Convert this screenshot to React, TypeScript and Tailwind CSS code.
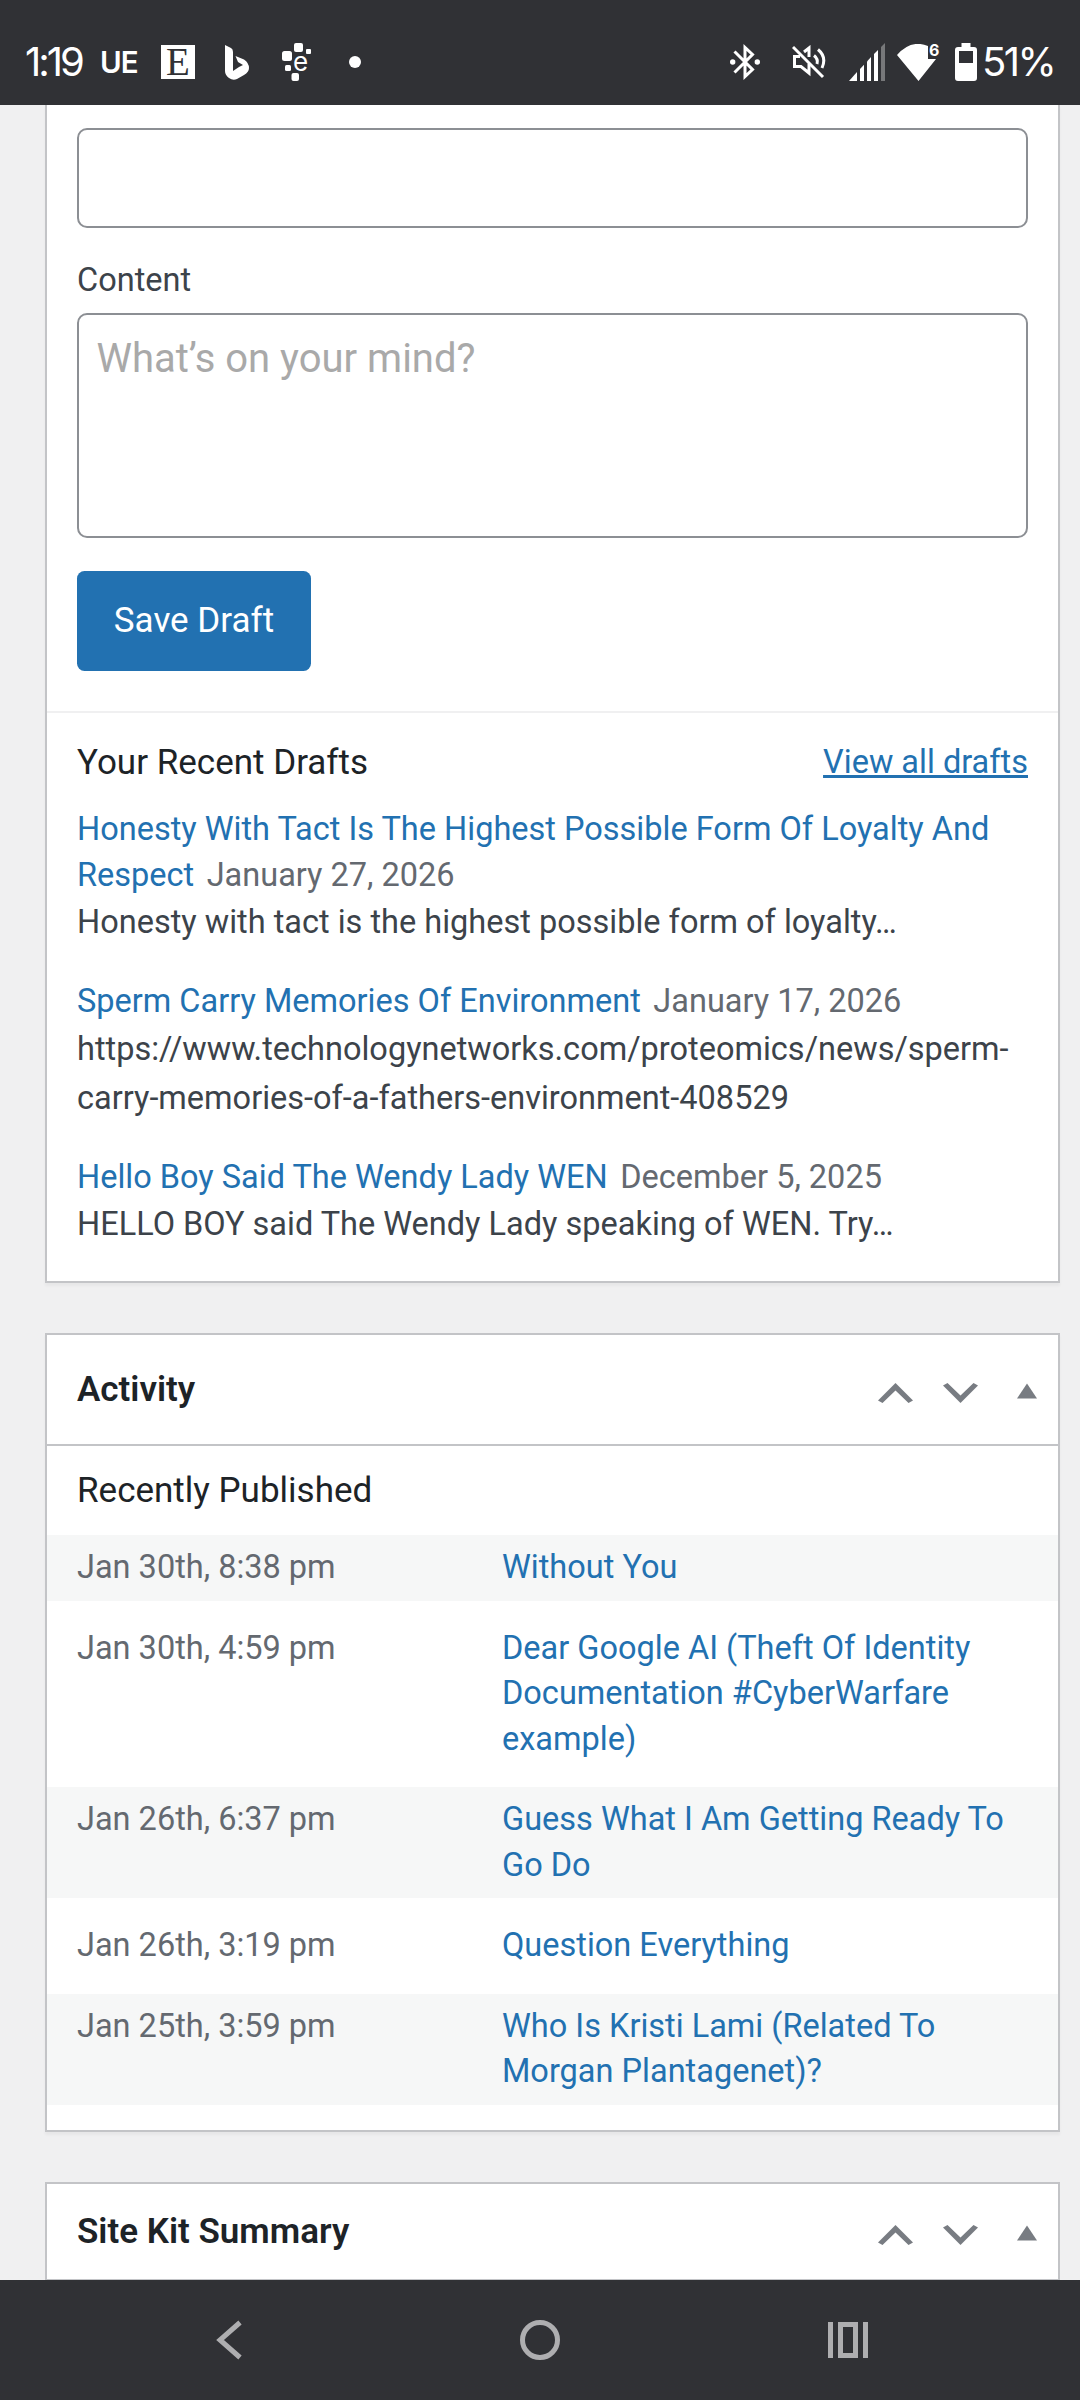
const DRAFTS = [
  {
    title: 'Honesty With Tact Is The Highest Possible Form Of Loyalty And Respect',
    date: 'January 27, 2026',
    excerpt: 'Honesty with tact is the highest possible form of loyalty…',
  },
  {
    title: 'Sperm Carry Memories Of Environment',
    date: 'January 17, 2026',
    excerpt:
      'https://www.technologynetworks.com/proteomics/news/sperm-carry-memories-of-a-fathers-environment-408529',
  },
  {
    title: 'Hello Boy Said The Wendy Lady WEN',
    date: 'December 5, 2025',
    excerpt: 'HELLO BOY said The Wendy Lady speaking of WEN. Try…',
  },
]

const POSTS = [
  { date: 'Jan 30th, 8:38 pm', title: 'Without You' },
  {
    date: 'Jan 30th, 4:59 pm',
    title: 'Dear Google AI (Theft Of Identity Documentation #CyberWarfare example)',
  },
  { date: 'Jan 26th, 6:37 pm', title: 'Guess What I Am Getting Ready To Go Do' },
  { date: 'Jan 26th, 3:19 pm', title: 'Question Everything' },
  { date: 'Jan 25th, 3:59 pm', title: 'Who Is Kristi Lami (Related To Morgan Plantagenet)?' },
]

function StatusBar() {
  return (
    <header className="flex h-[105px] shrink-0 items-center justify-between bg-[#303135] pt-[19px] pr-[28px] pl-[25px] font-['Inter',sans-serif] text-white">
      <div className="flex items-center">
        <span className="w-[75px] text-[40px] leading-[40px] tracking-[-3px]">1:19</span>
        <span className="w-[61px] text-[29.5px] leading-[40px] font-semibold tracking-[-1px]">UE</span>
        {/* Etsy */}
        <span className="flex size-[34px] items-center justify-center bg-white font-['Liberation_Serif',serif] text-[39px] leading-[34px] text-[#303135]">
          E
        </span>
        {/* Bing */}
        <svg className="ml-[30px]" width="24" height="35" viewBox="0 0 24 35" fill="currentColor">
          <path d="M0 0 L6 3 Q8 4 8 7 V26 L14 22 L18 20 L13 17 L10.5 11 L19 14.5 Q24 18 24 23 Q24 27 19 30 L12 34 Q8 36 4 33 Q0 30 0 26 Z" />
        </svg>
        {/* Dotted "e" app badge */}
        <span className="relative ml-[33px] block h-[38px] w-[29px]">
          <svg width="29" height="38" viewBox="0 0 29 38" fill="currentColor">
            <rect x="12" y="0" width="9" height="9" rx="2" />
            <rect x="24" y="6" width="5" height="5" rx="1" />
            <rect x="0" y="8" width="10" height="10" rx="2.5" />
            <rect x="3" y="22" width="6" height="6" rx="1.5" />
            <rect x="9.500" y="30" width="7.500" height="8" rx="2" />
          </svg>
          <span className="absolute top-[7px] left-[11px] text-[26px] leading-[24px]">e</span>
        </span>
        <span className="ml-[38px] size-3 rounded-full bg-white" />
      </div>

      <div className="flex items-center">
        {/* Bluetooth, connected */}
        <svg width="30" height="36" viewBox="0 0 30 36" fill="none" stroke="currentColor" strokeWidth="3">
          <path d="M4.500 7.500 L22.500 25.500 L15 32.500 V3.500 L22.500 10.500 L4.500 28.500" />
          <circle cx="2.700" cy="18" r="2.700" fill="currentColor" stroke="none" />
          <circle cx="27.300" cy="18" r="2.700" fill="currentColor" stroke="none" />
        </svg>
        {/* Muted speaker */}
        <svg className="ml-[32px]" width="34" height="34" viewBox="0 0 34 34" fill="none" stroke="currentColor" strokeWidth="3">
          <path d="M1 2 L31 32" />
          <path d="M8 11.500 H2.500 V21.500 H9 L17 28 V19" />
          <path d="M12 7 L17 3 V12" />
          <path d="M22 10.500 Q26.500 14 25 19" />
          <path d="M26 4.500 Q35 12 30 23" />
        </svg>
        {/* Signal strength */}
        <svg className="ml-[23px]" width="36" height="38" viewBox="0 0 36 38" fill="currentColor">
          <path d="M0 38 L8 29 V38 Z" />
          <path d="M11 26 L15 21.700 V38 H11 Z" />
          <path d="M18 18.500 L22 14 V38 H18 Z" />
          <path d="M25 11 L29 7 V38 H25 Z" />
          <path d="M32 4 L36 0 V38 H32 Z" fill="#77787a" />
        </svg>
        {/* Wi-Fi 6 */}
        <span className="relative ml-[12px] block h-[37px] w-[43px]">
          <svg width="43" height="37" viewBox="0 0 43 37" fill="currentColor">
            <path d="M0 11 Q14 -5 31 2 V15 H39 L21.500 37 Z" />
          </svg>
          <span className="absolute top-[-2px] left-[32px] text-[16px] leading-[16px] font-bold">6</span>
        </span>
        {/* Battery */}
        <svg className="ml-[15px]" width="22" height="38" viewBox="0 0 22 38" fill="currentColor">
          <path fillRule="evenodd" d="M6.500 0 H15.500 V4 H19 Q22 4 22 7 V35 Q22 38 19 38 H3 Q0 38 0 35 V7 Q0 4 3 4 H6.500 Z M4 8 V20 H18 V8 Z" />
        </svg>
        <span className="ml-[5px] w-[70px] text-[40px] leading-[40px] tracking-[-2.6px]">51%</span>
      </div>
    </header>
  )
}

function BoxHeader({ title }: { title: string }) {
  return (
    <div className="flex h-full items-center justify-between border-b-2 border-[#c3c4c7] pr-[21px] pl-[30px] text-[#787c82]">
      <h2 className="text-[35px] leading-[49px] font-semibold text-[#1d2327]">{title}</h2>
      <div className="mt-[7px] flex items-center">
        <svg width="35" height="20" viewBox="0 0 35 20" fill="currentColor">
          <path d="M17.500 0 L35 17.500 L30.500 20 L17.500 7.500 L4.500 20 L0 17.500 Z" />
        </svg>
        <svg className="ml-[30px]" width="35" height="20" viewBox="0 0 35 20" fill="currentColor">
          <path d="M17.500 20 L35 2.500 L30.500 0 L17.500 12.500 L4.500 0 L0 2.500 Z" />
        </svg>
        <svg className="mb-[4px] ml-[39px]" width="20" height="16" viewBox="0 0 20 16" fill="currentColor">
          <path d="M10 0.500 L20 15.500 H0 Z" />
        </svg>
      </div>
    </div>
  )
}

function QuickDraft() {
  return (
    <section className="h-[1178px] shrink-0 border-x-2 border-b-2 border-[#c3c4c7] bg-white shadow-[0_2.5px_2.5px_rgba(0,0,0,0.04)]">
      <div className="h-[608px] border-b-2 border-[#f0f0f1] px-[30px] pt-[23px]">
        <div className="h-[100px] rounded-[10px] border-2 border-[#8c8f94]" />
        <label className="mt-[29px] block h-[56px] text-[32.5px] leading-[46px] text-[#3c434a]">Content</label>
        <div className="h-[225px] rounded-[10px] border-2 border-[#8c8f94] px-[17.5px] pt-[16px] text-[40px] leading-[56px] text-[#a9a9a9]">
          What’s on your mind?
        </div>
        <button className="mt-[33px] block h-[100px] w-[234px] rounded-[7.5px] bg-[#2271b1] text-[35px] text-white">
          Save Draft
        </button>
      </div>

      <div className="px-[30px] pt-[25px]">
        <div className="flex items-start justify-between">
          <h2 className="text-[35px] leading-[49px] text-[#1d2327]">Your Recent Drafts</h2>
          <a className="text-[32.5px] leading-[48px] text-[#2271b1] underline decoration-[3px]">View all drafts</a>
        </div>
        <ul className="mt-[20px] text-[32.5px]">
          {DRAFTS.map((draft) => (
            <li key={draft.title} className="mb-[32.5px]">
              <div className="leading-[45.5px]">
                <a className="mr-[12.5px] text-[#2271b1]">{draft.title}</a>
                <time className="text-[#646970]">{draft.date}</time>
              </div>
              <p className="leading-[48.75px] text-[#3c434a]">{draft.excerpt}</p>
            </li>
          ))}
        </ul>
      </div>
    </section>
  )
}

function Activity() {
  return (
    <section className="mt-[50px] h-[799px] shrink-0 border-2 border-[#c3c4c7] bg-white shadow-[0_2.5px_2.5px_rgba(0,0,0,0.04)]">
      <div className="h-[111px]">
        <BoxHeader title="Activity" />
      </div>
      <h3 className="h-[89px] pt-[20px] pl-[30px] text-[35px] leading-[49px] text-[#1d2327]">
        Recently Published
      </h3>
      <ul className="flex flex-col gap-[15px] text-[32.5px] leading-[45.5px]">
        {POSTS.map((post) => (
          <li key={post.date} className="flex px-[30px] py-[10px] odd:bg-[#f6f7f7]">
            <span className="w-[425px] shrink-0 text-[#646970]">{post.date}</span>
            <a className="text-[#2271b1]">{post.title}</a>
          </li>
        ))}
      </ul>
    </section>
  )
}

function NavBar() {
  return (
    <nav className="flex h-[120px] shrink-0 items-center bg-[#303135] pl-[216px] text-[#aeaeb0]">
      <svg width="26" height="40" viewBox="0 0 26 40" fill="none" stroke="currentColor" strokeWidth="5">
        <path d="M24 2.500 L4 20 L24 37.500" />
      </svg>
      <svg className="ml-[278px]" width="40" height="40" viewBox="0 0 40 40" fill="none" stroke="currentColor" strokeWidth="5">
        <circle cx="20" cy="20" r="17.500" />
      </svg>
      <svg className="ml-[268px]" width="40" height="36" viewBox="0 0 40 36" fill="currentColor">
        <path fillRule="evenodd" d="M0 0 H5 V36 H0 Z M35 0 H40 V36 H35 Z M10 0 H30 V36 H10 Z M15 5 V31 H25 V5 Z" />
      </svg>
    </nav>
  )
}

export default function App() {
  return (
    <div className="flex h-[2400px] w-[1080px] flex-col overflow-hidden bg-[#f0f0f1] font-['Roboto',sans-serif]">
      <StatusBar />
      <main className="flex min-h-0 flex-1 flex-col overflow-hidden pr-[20px] pl-[45px]">
        <QuickDraft />
        <Activity />
        <section className="mt-[50px] h-[200px] shrink-0 border-2 border-[#c3c4c7] bg-white">
          {/* only the top of this box fits above the navigation bar */}
          <div className="h-[97px]">
            <BoxHeader title="Site Kit Summary" />
          </div>
        </section>
      </main>
      <NavBar />
    </div>
  )
}
